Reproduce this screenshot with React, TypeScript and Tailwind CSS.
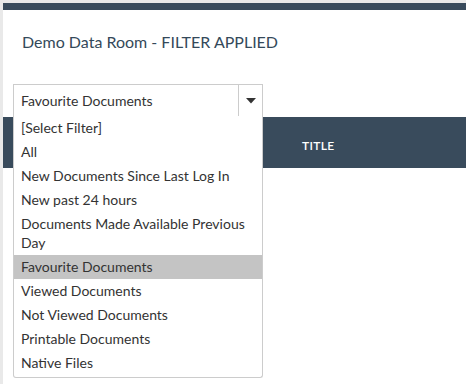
import React from "react";

const items = [
  "[Select Filter]",
  "All",
  "New Documents Since Last Log In",
  "New past 24 hours",
  "Documents Made Available Previous Day",
  "Favourite Documents",
  "Viewed Documents",
  "Not Viewed Documents",
  "Printable Documents",
  "Native Files",
];

export default function App() {
  return (
    <div
      className="relative w-[466px] h-[384px] bg-[#e9e9e9] pl-[3px] pt-[3px] overflow-hidden"
      style={{ fontFamily: "Lato, 'Open Sans', sans-serif" }}
    >
      <div className="h-full bg-white">
        <div className="h-[7px] bg-[#394b5c]" />
        <div className="pt-[22px] pl-[19px] leading-[20px] text-[16px] text-[#34495a]">
          Demo Data Room - FILTER APPLIED
        </div>
        <div className="mt-[32px] ml-[10px] w-[250px] h-[33px] border border-[#cccccc] flex text-[14px] text-[#333]">
          <div className="flex-1 flex items-center pl-[7px]">Favourite Documents</div>
          <div className="w-[24px] border-l border-[#cccccc] flex items-center justify-center">
            <svg width="10" height="6" viewBox="0 0 10 6">
              <path d="M0 0 L10 0 L5 5.5 Z" fill="#333" />
            </svg>
          </div>
        </div>
        <div className="h-[51px] bg-[#394b5c] flex items-center pt-[6px]">
          <div className="ml-[299px] text-white text-[12px] font-semibold tracking-[0.3px]">TITLE</div>
        </div>
      </div>
      <div className="absolute left-[13px] top-[116px] w-[250px] bg-white border border-t-0 border-[#cccccc] rounded-b-[3px] pb-[2px] text-[14px] text-[#333]">
        {items.map((t) => (
          <div
            key={t}
            className={
              "pl-[7px] pr-[4px] pt-[2px] pb-[3px] leading-[19px] " +
              (t === "Favourite Documents" ? "bg-[#c4c4c4]" : "")
            }
          >
            {t}
          </div>
        ))}
      </div>
    </div>
  );
}
